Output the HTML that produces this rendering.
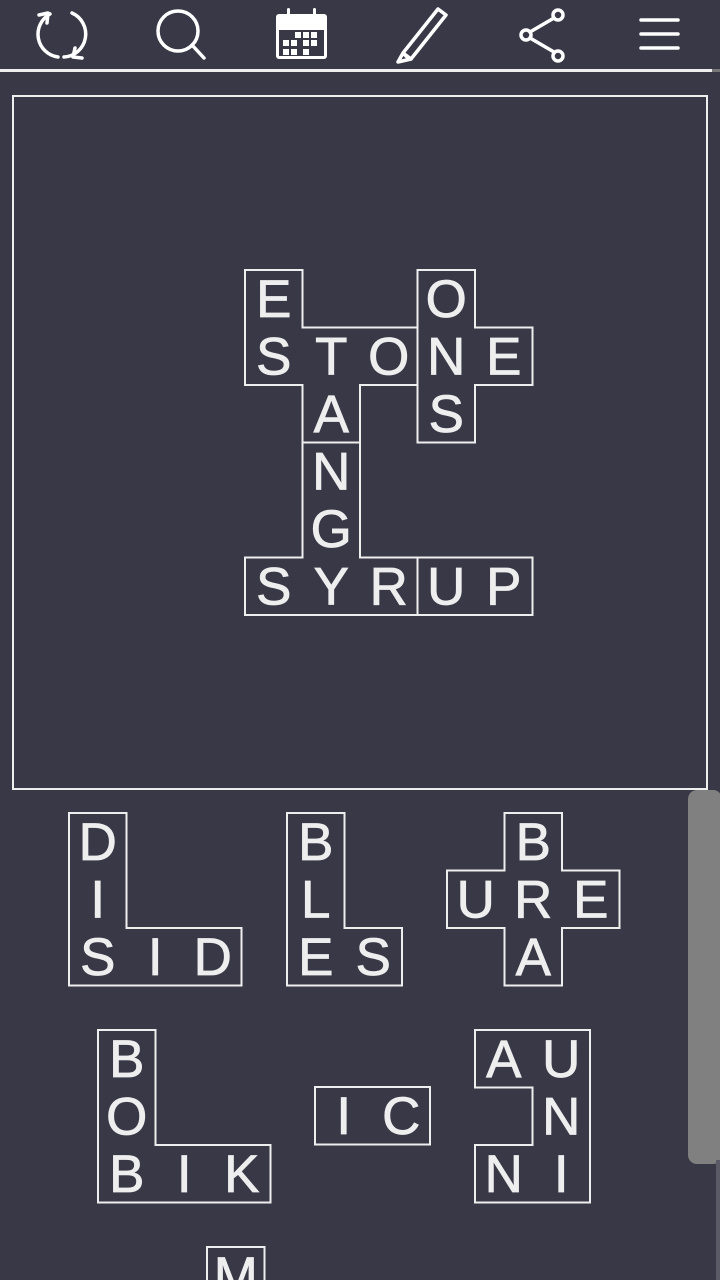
<!DOCTYPE html>
<html><head><meta charset="utf-8"><style>
html,body{margin:0;padding:0;background:#393847;width:720px;height:1280px;overflow:hidden}
svg{position:absolute;left:0;top:0}
text{font-family:"Liberation Sans",sans-serif;fill:#eeeeee;stroke:#eeeeee;stroke-width:0.8px;vector-effect:non-scaling-stroke;text-anchor:middle;font-size:0.92px}
.p{fill:none;stroke:#eeeeee;stroke-width:2px;vector-effect:non-scaling-stroke}
</style></head><body>
<svg width="720" height="1280" viewBox="0 0 720 1280">
<g fill="none" stroke="#fff" stroke-width="3.5" stroke-linecap="round" stroke-linejoin="round">
 <path d="M50 14 A23 23 0 0 0 58 57"/>
 <path d="M39 15 L48 13 L47 23"/>
 <path d="M72 13 A23 23 0 0 1 64 57"/>
 <path d="M82 58 L73 57 L75 48"/>
 <circle cx="178" cy="31" r="20"/>
 <path d="M192 45 L204 58"/>
 <path d="M403 53 L438 9 L446 15 L411 59 Z M403 53 L398 62 L411 59 M403 53 L408 58"/>
 <circle cx="558" cy="15" r="5"/><circle cx="526" cy="35" r="5"/><circle cx="558" cy="56" r="5"/>
 <path d="M530 32 L554 18 M530 38 L554 52"/>
 <path d="M641 20 H678 M641 34 H678 M641 48 H678"/>
</g>
<g fill="#fff">
 <path d="M279 14 H324 a3 3 0 0 1 3 3 V56 a3 3 0 0 1 -3 3 H279 a3 3 0 0 1 -3 -3 V17 a3 3 0 0 1 3 -3Z M279 30 V56 H324 V30Z" fill-rule="evenodd"/>
 <rect x="287" y="8" width="3" height="12" rx="1.5"/><rect x="313" y="8" width="3" height="12" rx="1.5"/>
 <rect x="295" y="32" width="6" height="6"/><rect x="303" y="32" width="6" height="6"/><rect x="311" y="32" width="6" height="6"/>
 <rect x="283" y="40" width="6" height="6"/><rect x="291" y="40" width="6" height="6"/><rect x="303" y="40" width="6" height="6"/><rect x="311" y="40" width="6" height="6"/>
 <rect x="283" y="49" width="6" height="6"/><rect x="291" y="49" width="6" height="6"/><rect x="303" y="49" width="6" height="6"/>
</g>
<rect x="0" y="69" width="712" height="3" fill="#eeeeee"/>
<rect x="712" y="69" width="8" height="3" fill="#777"/>
<rect x="13" y="96" width="694" height="693" fill="none" stroke="#eeeeee" stroke-width="2"/>
<rect x="688" y="790" width="34" height="374" rx="9" fill="#808080"/>
<rect x="716" y="1160" width="4" height="120" fill="#5a5a66"/>

<g transform="translate(245,270) scale(57.5)">
 <path class="p" d="M0,0 H1 V1 H3 V2 H2 V3 H1 V2 H0 Z"/>
 <path class="p" d="M3,0 H4 V1 H5 V2 H4 V3 H3 Z"/>
 <path class="p" d="M1,3 H2 V5 H3 V6 H0 V5 H1 Z"/>
 <path class="p" d="M3,5 H5 V6 H3 Z"/>
 <text x="0.5" y="0.82">E</text><text x="0.5" y="1.82">S</text><text x="1.5" y="1.82">T</text><text x="2.5" y="1.82">O</text><text x="1.5" y="2.82">A</text>
 <text x="3.5" y="0.82">O</text><text x="3.5" y="1.82">N</text><text x="4.5" y="1.82">E</text><text x="3.5" y="2.82">S</text>
 <text x="1.5" y="3.82">N</text><text x="1.5" y="4.82">G</text><text x="0.5" y="5.82">S</text><text x="1.5" y="5.82">Y</text><text x="2.5" y="5.82">R</text>
 <text x="3.5" y="5.82">U</text><text x="4.5" y="5.82">P</text>
</g>
<g transform="translate(69,813) scale(57.5)">
 <path class="p" d="M0,0 H1 V2 H3 V3 H0 Z"/>
 <text x="0.5" y="0.82">D</text><text x="0.5" y="1.82">I</text><text x="0.5" y="2.82">S</text><text x="1.5" y="2.82">I</text><text x="2.5" y="2.82">D</text>
</g>
<g transform="translate(287,813) scale(57.5)">
 <path class="p" d="M0,0 H1 V2 H2 V3 H0 Z"/>
 <text x="0.5" y="0.82">B</text><text x="0.5" y="1.82">L</text><text x="0.5" y="2.82">E</text><text x="1.5" y="2.82">S</text>
</g>
<g transform="translate(447,813) scale(57.5)">
 <path class="p" d="M1,0 H2 V1 H3 V2 H2 V3 H1 V2 H0 V1 H1 Z"/>
 <text x="1.5" y="0.82">B</text><text x="0.5" y="1.82">U</text><text x="1.5" y="1.82">R</text><text x="2.5" y="1.82">E</text><text x="1.5" y="2.82">A</text>
</g>
<g transform="translate(98,1030) scale(57.5)">
 <path class="p" d="M0,0 H1 V2 H3 V3 H0 Z"/>
 <text x="0.5" y="0.82">B</text><text x="0.5" y="1.82">O</text><text x="0.5" y="2.82">B</text><text x="1.5" y="2.82">I</text><text x="2.5" y="2.82">K</text>
</g>
<g transform="translate(315,1087) scale(57.5)">
 <path class="p" d="M0,0 H2 V1 H0 Z"/>
 <text x="0.5" y="0.82">I</text><text x="1.5" y="0.82">C</text>
</g>
<g transform="translate(475,1030) scale(57.5)">
 <path class="p" d="M0,0 H2 V3 H0 V2 H1 V1 H0 Z"/>
 <text x="0.5" y="0.82">A</text><text x="1.5" y="0.82">U</text><text x="1.5" y="1.82">N</text><text x="0.5" y="2.82">N</text><text x="1.5" y="2.82">I</text>
</g>
<g transform="translate(207,1247) scale(57.5)">
 <path class="p" d="M0,0 H1 V1 H0 Z"/>
 <text x="0.5" y="0.82">M</text>
</g>
</svg>
</body></html>
